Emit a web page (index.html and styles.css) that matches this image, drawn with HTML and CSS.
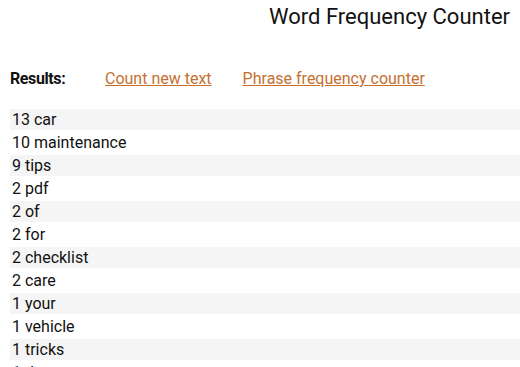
FILE: index.html
```html
<!DOCTYPE html>
<html>
<head>
<meta charset="utf-8">
<link rel="stylesheet" href="styles.css">
</head>
<body>
<div class="title">Word Frequency Counter</div>
<div class="bar">
  <span class="label">Results:</span>
  <a class="link" href="#">Count new text</a>
  <a class="link" href="#">Phrase frequency counter</a>
</div>
<table class="results">
  <tr><td>13 car</td></tr>
  <tr><td>10 maintenance</td></tr>
  <tr><td>9 tips</td></tr>
  <tr><td>2 pdf</td></tr>
  <tr><td>2 of</td></tr>
  <tr><td>2 for</td></tr>
  <tr><td>2 checklist</td></tr>
  <tr><td>2 care</td></tr>
  <tr><td>1 your</td></tr>
  <tr><td>1 vehicle</td></tr>
  <tr><td>1 tricks</td></tr>
  <tr><td>1 the</td></tr>
</table>
</body>
</html>
```

FILE: styles.css
```css
html, body {
  margin: 0;
  padding: 0;
  background: #ffffff;
}
body {
  font-family: Roboto, "Liberation Sans", sans-serif;
  color: #111111;
  padding: 4px 0 0 10px;
  width: 520px;
  box-sizing: border-box;
  overflow: hidden;
}
.title {
  text-align: right;
  font-size: 22px;
  line-height: 26px;
  margin-right: 10px;
}
.bar {
  display: flex;
  align-items: baseline;
  margin-top: 39px;
  height: 38px;
}
.label {
  font-weight: bold;
  font-size: 16px;
  letter-spacing: -0.4px;
  width: 95px;
}
.link {
  color: #c5702f;
  font-size: 16px;
  margin-right: 31px;
}
.results {
  border-spacing: 0 2px;
  width: 510px;
  font-size: 16px;
}
.results td {
  padding: 1px 2px;
  line-height: 19px;
}
.results tr:nth-child(odd) td {
  background: #f5f5f5;
}
```
